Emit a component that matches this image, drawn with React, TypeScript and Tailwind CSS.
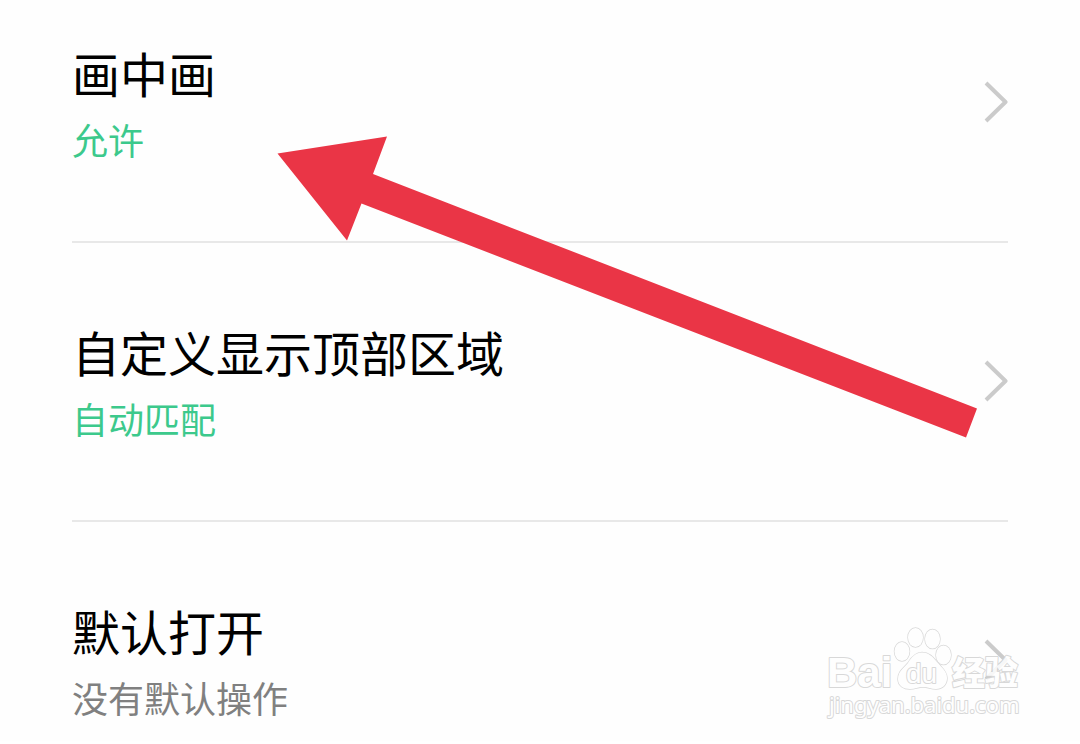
type Setting = {
  title: string;
  value: string;
  active: boolean;
};

const settings: Setting[] = [
  { title: '画中画', value: '允许', active: true },
  { title: '自定义显示顶部区域', value: '自动匹配', active: true },
  { title: '默认打开', value: '没有默认操作', active: false },
];

function Chevron() {
  return (
    <svg viewBox="0 0 24 42" fill="none" className="h-[42px] w-6 shrink-0" aria-hidden="true">
      <path d="M2 2 L21.5 21 L2 40" stroke="#cbcbcb" strokeWidth="4" strokeLinejoin="round" />
    </svg>
  );
}

function SettingRow({ title, value, active }: Setting) {
  return (
    <li className="group border-b-2 border-[#e8e8e8] last:border-b-0">
      <button
        type="button"
        className="flex w-full items-center justify-between pt-[76px] pb-[78px] text-left group-first:pt-10 group-last:pb-5"
      >
        <span className="flex flex-col gap-[11px]">
          <span className="text-[48px] leading-[64px] text-black">{title}</span>
          <span className={active ? 'text-4xl leading-[48px] text-[#3cc98c]' : 'text-4xl leading-[48px] text-[#808080]'}>
            {value}
          </span>
        </span>
        <Chevron />
      </button>
    </li>
  );
}

function PointerArrow() {
  return (
    <svg
      viewBox="0 0 700 304"
      className="pointer-events-none absolute top-[136px] left-[277px] h-[304px] w-[700px]"
      aria-hidden="true"
    >
      <path d="M0.5 17.5 L110 0.5 L96 38 L700 272.5 L689 301.5 L84.5 67.5 L70 104.5 Z" fill="#ea3546" />
    </svg>
  );
}

function Watermark() {
  return (
    <svg
      viewBox="0 0 200 100"
      className="pointer-events-none absolute right-14 bottom-[18px] h-[100px] w-[200px] opacity-85"
      fill="#ffffff"
      stroke="#d2d2d2"
      strokeWidth="2"
      strokeLinejoin="round"
      paintOrder="stroke"
    >
      <text x="3" y="64" className="font-['Liberation_Sans',sans-serif] text-[42px] font-bold">
        Bai
      </text>
      {/* paw */}
      <g strokeWidth="1.4">
        <ellipse cx="78" cy="28.5" rx="7.5" ry="9.5" />
        <ellipse cx="91.5" cy="14.5" rx="7.5" ry="9.5" />
        <ellipse cx="108.5" cy="16" rx="7.5" ry="9.5" />
        <ellipse cx="119.5" cy="32" rx="7.5" ry="9.5" />
        <path d="M98 29.5 C91 29.5 87 35 84 40 C80 45 74 48 74 56 C74 63 80 66 86 66 C91 66 94 64 99 64 C104 64 107 66 112 66 C118 66 123 62 123 55 C123 48 117 44 113 39 C109 34 105 29.5 98 29.5 Z" />
      </g>
      <text x="82" y="60" className="font-['Liberation_Sans',sans-serif] text-[28px]">
        du
      </text>
      <text x="128" y="62" className="font-['Noto_Sans_CJK_SC',sans-serif] text-[33px] font-black">
        经验
      </text>
      <text x="5" y="90" className="font-['Noto_Sans',sans-serif] text-[22px]">
        jingyan.baidu.com
      </text>
    </svg>
  );
}

export default function App() {
  return (
    <main className="relative overflow-hidden bg-[#fefefe] px-[72px] font-['Noto_Sans_CJK_SC',sans-serif]">
      <ul>
        {settings.map((setting) => (
          <SettingRow key={setting.title} {...setting} />
        ))}
      </ul>
      <PointerArrow />
      <Watermark />
    </main>
  );
}
